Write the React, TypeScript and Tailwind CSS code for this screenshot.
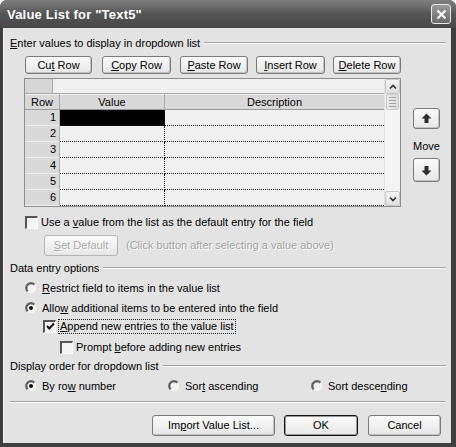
import React from "react";

const U = ({ children }: { children: React.ReactNode }) => (
  <span className="underline underline-offset-[1px] decoration-[1px]">{children}</span>
);

function Btn({
  children,
  className = "",
  def = false,
  disabled = false,
}: {
  children: React.ReactNode;
  className?: string;
  def?: boolean;
  disabled?: boolean;
}) {
  return (
    <div
      className={`flex items-center justify-center rounded-[3px] border bg-gradient-to-b from-[#fbfbfb] to-[#e6e6e6] ${
        def
          ? "border-[#111] shadow-[inset_0_0_0_1px_#9a9a9a]"
          : disabled
          ? "border-[#b4b4b4] text-[#a9a9a9]"
          : "border-[#7a7a7a] shadow-[inset_-1px_-1px_0_#c2c2c2]"
      } ${className}`}
    >
      <span className="whitespace-pre">{children}</span>
    </div>
  );
}

function Radio({ checked = false }: { checked?: boolean }) {
  return (
    <svg width="12" height="12" viewBox="0 0 12 12" className="shrink-0">
      <circle cx="6" cy="6" r="5.2" fill="#f4f4f4" />
      <path d="M2.3 9.7 A5.2 5.2 0 0 1 9.7 2.3" stroke="#6a6a6a" strokeWidth="1.4" fill="none" />
      <path d="M3 8.9 A4.1 4.1 0 0 1 8.9 3" stroke="#2a2a2a" strokeWidth="1" fill="none" />
      {checked && <circle cx="6" cy="6" r="2" fill="#111" />}
    </svg>
  );
}

function Check({ checked = false }: { checked?: boolean }) {
  return (
    <div className="w-[13px] h-[13px] shrink-0 bg-[#f4f4f4] border-t-2 border-l-2 border-t-[#555] border-l-[#555] border-r border-b border-r-white border-b-white flex items-center justify-center">
      {checked && (
        <svg width="9" height="9" viewBox="0 0 9 9">
          <path d="M1 4 L3.3 6.5 L8 1.5" stroke="#111" strokeWidth="2" fill="none" />
        </svg>
      )}
    </div>
  );
}

function Group({ label, className = "" }: { label: React.ReactNode; className?: string }) {
  return (
    <div className={`flex items-center h-[14px] pl-[6px] pr-[5px] ${className}`}>
      <span className="whitespace-nowrap">{label}</span>
      <div className="flex-1 ml-[4px] border-t border-t-[#a3a3a3] border-b border-b-white" />
    </div>
  );
}

function ArrowUp() {
  return (
    <svg width="11" height="11" viewBox="0 0 11 11">
      <polygon points="5.5,0.5 10.5,5.5 7.5,5.5 7.5,10 3.5,10 3.5,5.5 0.5,5.5" fill="#2e2e2e" />
    </svg>
  );
}
function ArrowDown() {
  return (
    <svg width="11" height="11" viewBox="0 0 11 11">
      <polygon points="5.5,10.5 10.5,5.5 7.5,5.5 7.5,1 3.5,1 3.5,5.5 0.5,5.5" fill="#2e2e2e" />
    </svg>
  );
}

function ScrollBtn({ down = false }: { down?: boolean }) {
  return (
    <div className="h-[15px] w-full rounded-[2px] border border-[#c8c8c8] bg-gradient-to-b from-[#f6f6f6] to-[#dedede] flex items-center justify-center">
      <svg width="8" height="6" viewBox="0 0 8 6">
        <path d={down ? "M1 1.5 L4 4.5 L7 1.5" : "M1 4.5 L4 1.5 L7 4.5"} stroke="#333" strokeWidth="1.6" fill="none" />
      </svg>
    </div>
  );
}

export default function App() {
  const rows = [1, 2, 3, 4, 5, 6];
  return (
    <div className="w-[456px] h-[447px] bg-white font-['Liberation_Sans',Arial,sans-serif] text-[11px] text-black leading-none">
      <div className="w-full h-full rounded-t-[7px] bg-[#3f3f3f] flex flex-col overflow-hidden">
        {/* Title bar */}
        <div className="h-[28px] shrink-0 bg-gradient-to-b from-[#808080] via-[#555555] to-[#474747] flex items-center justify-between pl-[7px] pr-[5px]">
          <span className="text-white font-bold text-[13px] tracking-[0.2px] mt-[1px]">Value List for "Text5"</span>
          <div className="w-[20px] h-[20px] rounded-[3px] border border-[#e8e8e8] bg-gradient-to-b from-[#9a9a9a] to-[#6a6a6a] flex items-center justify-center">
            <svg width="11" height="11" viewBox="0 0 11 11">
              <path d="M1.5 1.5 L9.5 9.5 M9.5 1.5 L1.5 9.5" stroke="#fff" strokeWidth="2" />
            </svg>
          </div>
        </div>

        {/* Body */}
        <div className="flex-1 ml-[3px] mr-[5px] mb-[4px] bg-[#e3e3e3] flex flex-col border-l border-l-[#f4f4f4]">
          <Group label={<><U>E</U>nter values to display in dropdown list</>} className="mt-[8px]" />

          {/* Row buttons */}
          <div className="flex ml-[21px] mt-[6px] h-[18px]">
            <Btn className="w-[67px]">Cu<U>t</U> Row</Btn>
            <Btn className="w-[69px] ml-[10px]"><U>C</U>opy Row</Btn>
            <Btn className="w-[68px] ml-[9px]"><U>P</U>aste Row</Btn>
            <Btn className="w-[69px] ml-[8px]"><U>I</U>nsert Row</Btn>
            <Btn className="w-[68px] ml-[8px]"><U>D</U>elete Row</Btn>
          </div>

          {/* Table + move */}
          <div className="flex ml-[20px] mt-[4px]">
            <div className="w-[377px] h-[129px] border border-[#8e8e8e] flex bg-[#efefef]">
              <div className="flex-1 flex flex-col">
                {/* top row */}
                <div className="h-[15px] flex border-b border-b-[#a8a8a8]">
                  <div className="w-[28px] bg-[#d6d6d6] border-r border-r-[#a8a8a8]" />
                  <div className="flex-1 bg-[#f0f0f0]" />
                </div>
                {/* header */}
                <div className="h-[16px] flex bg-[#d9d9d9] border-b border-b-[#9a9a9a]">
                  <div className="w-[35px] flex items-center justify-center border-r border-r-[#a8a8a8] border-t border-t-[#f2f2f2]">Row</div>
                  <div className="w-[105px] flex items-center justify-center border-r border-r-[#a8a8a8] border-t border-t-[#f2f2f2]">Value</div>
                  <div className="flex-1 flex items-center justify-center border-t border-t-[#f2f2f2]">Description</div>
                </div>
                {rows.map((r) => (
                  <div key={r} className="h-[16px] flex">
                    <div className="w-[35px] bg-[#d9d9d9] flex items-center justify-end pr-[3px] border-b border-b-[#efefef] border-r border-r-[#b0b0b0]">{r}</div>
                    <div className={`w-[105px] border-b border-dotted border-b-[#1a1a1a] border-r border-r-[#1a1a1a] ${r === 1 ? "bg-black" : "bg-[#f1f1f1]"}`} />
                    <div className="flex-1 border-b border-dotted border-b-[#1a1a1a] bg-[#f1f1f1]" />
                  </div>
                ))}
              </div>
              {/* Scrollbar */}
              <div className="w-[16px] flex flex-col bg-[#f4f4f4] border-l border-l-[#e0e0e0]">
                <ScrollBtn />
                <div className="h-[16px] mx-[1px] rounded-[2px] border border-[#c8c8c8] bg-gradient-to-r from-[#eeeeee] to-[#dcdcdc] flex flex-col items-center justify-center gap-[2px]">
                  <div className="w-[7px] border-t border-t-[#a0a0a0]" />
                  <div className="w-[7px] border-t border-t-[#a0a0a0]" />
                  <div className="w-[7px] border-t border-t-[#a0a0a0]" />
                  <div className="w-[7px] border-t border-t-[#a0a0a0]" />
                </div>
                <div className="flex-1" />
                <ScrollBtn down />
              </div>
            </div>
            <div className="flex flex-col items-center ml-[12px] mt-[30px] w-[27px]">
              <Btn className="w-[27px] h-[21px]"><ArrowUp /></Btn>
              <div className="h-[14px] mt-[10px] flex items-center">Move</div>
              <Btn className="w-[27px] h-[24px] mt-[5px]"><ArrowDown /></Btn>
            </div>
          </div>

          {/* default checkbox */}
          <div className="flex items-center h-[14px] ml-[21px] mt-[8px] gap-[3px]">
            <Check />
            <span>Use a <U>v</U>alue from the list as the default entry for the field</span>
          </div>

          <div className="flex items-center h-[21px] ml-[40px] mt-[6px]">
            <Btn disabled className="w-[74px] h-[21px] [text-shadow:1px_1px_0_#fff]"><U>S</U>et Default</Btn>
            <span className="ml-[8px] text-[#a3a3a3] [text-shadow:1px_1px_0_#fff]">(Click button after selecting a value above)</span>
          </div>

          <Group label="Data entry options" className="mt-[5px]" />

          <div className="flex items-center h-[14px] ml-[21px] mt-[6px] gap-[5px]">
            <Radio />
            <span><U>R</U>estrict field to items in the value list</span>
          </div>
          <div className="flex items-center h-[14px] ml-[21px] mt-[6px] gap-[5px]">
            <Radio checked />
            <span>Allo<U>w</U> additional items to be entered into the field</span>
          </div>
          <div className="flex items-center h-[14px] ml-[39px] mt-[4px] gap-[2px]">
            <Check checked />
            <span className="border border-dotted border-[#222] px-[1px] py-[1px]"><U>A</U>ppend new entries to the value list</span>
          </div>
          <div className="flex items-center h-[14px] ml-[56px] mt-[7px] gap-[3px]">
            <Check />
            <span>Prompt <U>b</U>efore adding new entries</span>
          </div>

          <Group label="Display order for dropdown list" className="mt-[5px]" />

          <div className="flex items-center h-[14px] ml-[21px] mt-[6px]">
            <div className="flex items-center gap-[5px] w-[143px]">
              <Radio checked />
              <span>By ro<U>w</U> number</span>
            </div>
            <div className="flex items-center gap-[5px] w-[143px]">
              <Radio />
              <span>Sor<U>t</U> ascending</span>
            </div>
            <div className="flex items-center gap-[5px]">
              <Radio />
              <span>Sort desce<U>n</U>ding</span>
            </div>
          </div>

          <div className="ml-[6px] mr-[6px] mt-[8px] border-t border-t-[#a3a3a3] border-b border-b-white" />

          <div className="flex justify-end mt-[12px] mr-[10px] h-[21px]">
            <Btn className="w-[123px]">Im<U>p</U>ort Value List...</Btn>
            <Btn def className="w-[74px] ml-[9px]">OK</Btn>
            <Btn className="w-[73px] ml-[10px]">Cancel</Btn>
          </div>
        </div>
      </div>
    </div>
  );
}
